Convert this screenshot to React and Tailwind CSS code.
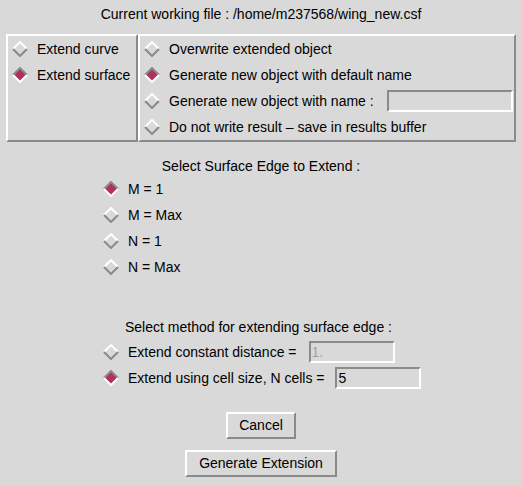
import React from "react";

function Diamond({ on }) {
  return (
    <svg width="16" height="16" viewBox="0 0 16 16" className="shrink-0">
      <polygon points="8,1.5 14.5,8 8,14.5 1.5,8" fill={on ? "#b03060" : "none"} />
      <polyline points="1,8 8,1 15,8" fill="none" stroke={on ? "#8a8a8a" : "#ffffff"} strokeWidth="2" />
      <polyline points="1,8 8,15 15,8" fill="none" stroke={on ? "#ffffff" : "#8a8a8a"} strokeWidth="2" />
    </svg>
  );
}

function Radio({ on, label, children }) {
  return (
    <div className="h-[26px] flex items-center gap-[9px]">
      <Diamond on={on} />
      <span className="whitespace-nowrap">{label}</span>
      {children}
    </div>
  );
}

function Field({ value, dim, className }) {
  return (
    <div
      className={
        "h-[22px] border-2 border-t-[#8a8a8a] border-l-[#8a8a8a] border-b-white border-r-white flex items-center pl-[1px] leading-none " +
        (dim ? "text-[#a0a0a0] " : "text-black ") +
        className
      }
    >
      {value}
    </div>
  );
}

function Button({ label, width }) {
  return (
    <button
      className={
        "h-[27px] border-2 border-t-white border-l-white border-b-[#8a8a8a] border-r-[#8a8a8a] bg-[#d9d9d9] flex items-center justify-center " +
        width
      }
    >
      {label}
    </button>
  );
}

export default function App() {
  const frame = "border-2 border-t-white border-l-white border-b-[#8a8a8a] border-r-[#8a8a8a] h-[108px]";
  return (
    <div className="w-[522px] h-[486px] bg-[#d9d9d9] text-black text-[14px] font-['Liberation_Sans',Arial,sans-serif] flex flex-col overflow-hidden">
      <div className="pt-[6px] leading-[16px] text-center">Current working file : /home/m237568/wing_new.csf</div>

      <div className="mt-[12px] mx-[6px] flex">
        <div className={frame + " w-[132px] pl-[4px]"}>
          <Radio label="Extend curve" />
          <Radio on label="Extend surface" />
        </div>
        <div className={frame + " flex-1 pl-[4px]"}>
          <Radio label="Overwrite extended object" />
          <Radio on label="Generate new object with default name" />
          <Radio label="Generate new object with name :">
            <Field value="" className="ml-auto mr-[1px] w-[126px]" />
          </Radio>
          <Radio label="Do not write result – save in results buffer" />
        </div>
      </div>

      <div className="mt-[16px] leading-[16px] text-center">Select Surface Edge to Extend :</div>
      <div className="mt-[2px] pl-[103px]">
        <Radio on label="M = 1" />
        <Radio label="M = Max" />
        <Radio label="N = 1" />
        <Radio label="N = Max" />
      </div>

      <div className="mt-[39px] leading-[16px] pl-[125px]">Select method for extending surface edge :</div>
      <div className="mt-[4px] pl-[103px]">
        <Radio label="Extend constant distance =">
          <Field value="1." dim className="ml-[3px] w-[86px]" />
        </Radio>
        <Radio on label="Extend using cell size, N cells =">
          <Field value="5" className="ml-[2px] w-[86px]" />
        </Radio>
      </div>

      <div className="mt-[21px] flex justify-center">
        <Button label="Cancel" width="w-[70px]" />
      </div>
      <div className="mt-[11px] flex justify-center">
        <Button label="Generate Extension" width="w-[152px]" />
      </div>
    </div>
  );
}
